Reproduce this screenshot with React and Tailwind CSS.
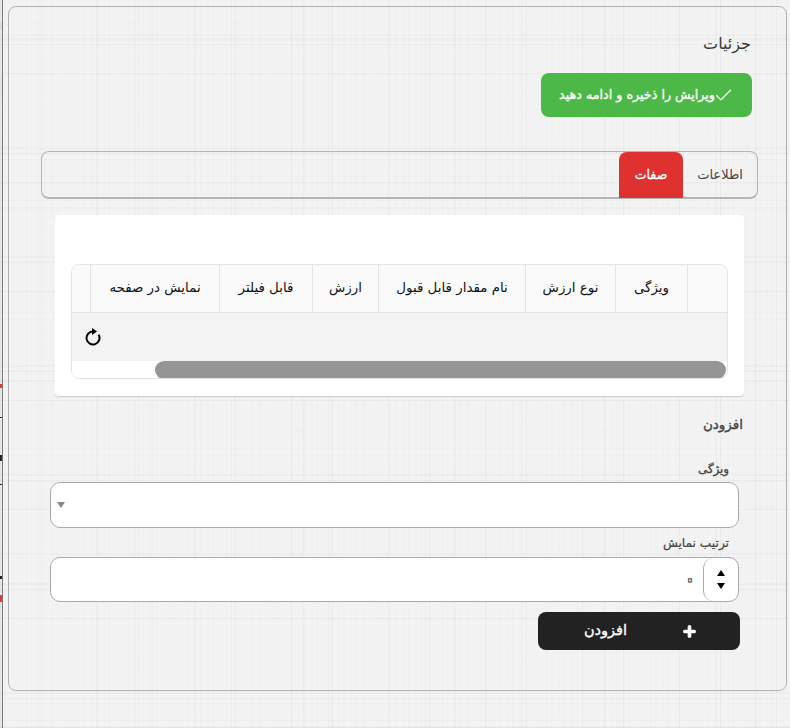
import React from 'react';
import { Check } from 'lucide-react';
import { FaPlus } from 'react-icons/fa';

const columns = ['', 'ویژگی', 'نوع ارزش', 'نام مقدار قابل قبول', 'ارزش', 'قابل فیلتر', 'نمایش در صفحه', ''];

const linen =
  'bg-[#f3f3f3] bg-[repeating-linear-gradient(90deg,rgba(0,0,0,0.035)_0_1px,transparent_1px_37px,rgba(0,0,0,0.025)_37px_38px,transparent_38px_41px,rgba(0,0,0,0.03)_41px_42px,transparent_42px_97px),repeating-linear-gradient(0deg,rgba(0,0,0,0.03)_0_1px,transparent_1px_29px,rgba(0,0,0,0.035)_29px_30px,transparent_30px_34px,rgba(0,0,0,0.02)_34px_36px,transparent_36px_109px),repeating-linear-gradient(90deg,rgba(0,0,0,0.012)_0_1px,transparent_1px_5px,rgba(0,0,0,0.01)_5px_6px,transparent_6px_13px),repeating-linear-gradient(0deg,rgba(0,0,0,0.012)_0_1px,transparent_1px_7px,rgba(0,0,0,0.01)_7px_8px,transparent_8px_17px),repeating-linear-gradient(90deg,rgba(0,0,0,0.02)_0_2px,transparent_2px_151px),repeating-linear-gradient(0deg,rgba(0,0,0,0.02)_0_2px,transparent_2px_173px)]';

function Triangle({ up, className }) {
  return (
    <svg width="8" height="6" viewBox="0 0 8 6" className={className}>
      <path d={up ? 'M4 0L8 6H0Z' : 'M0 0H8L4 6Z'} fill="currentColor" />
    </svg>
  );
}

function Refresh() {
  return (
    <svg width="18" height="18" viewBox="0 0 18 18" className="text-black">
      <path d="M14.6 6.7A6.5 6.5 0 1 1 9 3.5" fill="none" stroke="currentColor" strokeWidth="2" />
      <path d="M8 0L13 3.5L8 7Z" fill="currentColor" />
    </svg>
  );
}

export default function App() {
  return (
    <div className={`relative flex h-[728px] w-[790px] overflow-hidden font-['DejaVu_Sans',sans-serif] ${linen}`}>
      {/* pieces of the page underneath, showing at the left edge */}
      <div className="absolute left-0 top-[22px] h-[7px] w-[2px] bg-[#ddd]" />
      <div className="absolute left-0 top-[72px] h-[25px] w-[2px] bg-[#e4e4e4]" />
      <div className="absolute left-0 top-[384px] h-[4px] w-[2px] bg-[#e33]" />
      <div className="absolute left-0 top-[417px] h-[1px] w-[2px] bg-[#222]" />
      <div className="absolute left-0 top-[455px] h-[6px] w-[2px] bg-[#222]" />
      <div className="absolute left-0 top-[484px] h-[1px] w-[2px] bg-[#222]" />
      <div className="absolute left-0 top-[576px] h-[3px] w-[2px] bg-[#222]" />
      <div className="absolute left-0 top-[595px] h-[7px] w-[2px] bg-[#e33]" />

      <div className="ml-[2px] w-[1px] shrink-0 bg-[#777]" />

      <div
        dir="rtl"
        className="ml-[5px] mt-[6px] flex h-[685px] w-[779px] shrink-0 flex-col rounded-lg border border-[#b0b0b0] text-[#333]"
      >
        <h1 className="mr-[35px] mt-[25px] text-[16px] leading-6 font-normal text-[#3a3a3a]">جزئیات</h1>

        <button className="mr-[34px] mt-[17px] flex h-[44px] w-[211px] items-center justify-center rounded-lg bg-[#4cb848] text-[12.7px] text-white [-webkit-text-stroke:0.35px_white]">
          <Check size={21} strokeWidth={1.5} className="-ml-[2px]" />
          <span>ویرایش را ذخیره و ادامه دهید</span>
        </button>

        <div className="mr-[28px] mt-[34px] flex h-[48px] w-[717px] rounded-lg border border-b-2 border-[#b5b5b5]">
          <div className="flex w-[74px] items-center justify-center text-[13px] text-[#444]">اطلاعات</div>
          <div className="flex h-[46px] w-[64px] items-center justify-center rounded-t-lg bg-[#e03131] text-[12.5px] text-white [-webkit-text-stroke:0.35px_white]">
            صفات
          </div>
        </div>

        <div className="mr-[42px] mt-[16px] h-[181px] w-[689px] rounded bg-white px-[16px] pt-[49px] shadow-[0_1px_1px_rgba(0,0,0,0.15)]">
          <div className="h-[115px] w-[657px] overflow-hidden rounded-lg border border-[#e4e4e4]">
            <div className="grid h-[48px] grid-cols-[40px_72px_90px_147px_66px_93px_129px_19px] border-b border-[#e4e4e4] bg-[#fafafa] text-[13.4px] text-[#111]">
              {columns.map((title, i) => (
                <div key={i} className="flex items-center justify-center border-l border-[#e4e4e4] last:border-l-0">
                  {title}
                </div>
              ))}
            </div>
            <div className="flex h-[48px] items-center justify-end bg-[#f3f3f3] pl-[12px]">
              <Refresh />
            </div>
            <div className="flex h-[18px] bg-white pr-[1px]">
              <div className="h-[18px] w-[571px] rounded-full bg-[#959595]" />
            </div>
          </div>
        </div>

        <h2 className="mr-[43px] mt-[18px] text-[13.5px] leading-5 text-[#444] [-webkit-text-stroke:0.35px_#444]">افزودن</h2>

        <label className="mr-[57px] mt-[27px] block text-[11.8px] leading-4 text-[#444] [-webkit-text-stroke:0.3px_#444]">ویژگی</label>
        <div className="mr-[47px] mt-[5px] flex h-[46px] w-[689px] items-center justify-end rounded-[10px] border border-[#aaa] bg-white pl-[6px]">
          <Triangle className="text-[#888]" />
        </div>

        <label className="mr-[57px] mt-[7px] block text-[12.2px] leading-4 text-[#444] [-webkit-text-stroke:0.2px_#444]">ترتیب نمایش</label>
        <div className="mr-[47px] mt-[6px] flex h-[45px] w-[689px] items-center rounded-[10px] border border-[#aaa] bg-white">
          <div className="flex h-full w-[35px] flex-col items-center justify-center gap-[7px] rounded-[10px] border-l border-[#aaa] text-black">
            <Triangle up />
            <Triangle />
          </div>
          <span className="-mt-[2px] mr-[6px] text-[26px] leading-none text-transparent [-webkit-text-stroke:1px_#444]">۰</span>
        </div>

        <button className="mr-[46px] mt-[10px] flex h-[38px] w-[202px] items-center rounded-lg bg-[#222] text-[14.5px] text-white [-webkit-text-stroke:0.35px_white]">
          <FaPlus size={13} strokeWidth={50} stroke="currentColor" className="mr-[44px]" />
          <span className="mr-[56px]">افزودن</span>
        </button>
      </div>
    </div>
  );
}
